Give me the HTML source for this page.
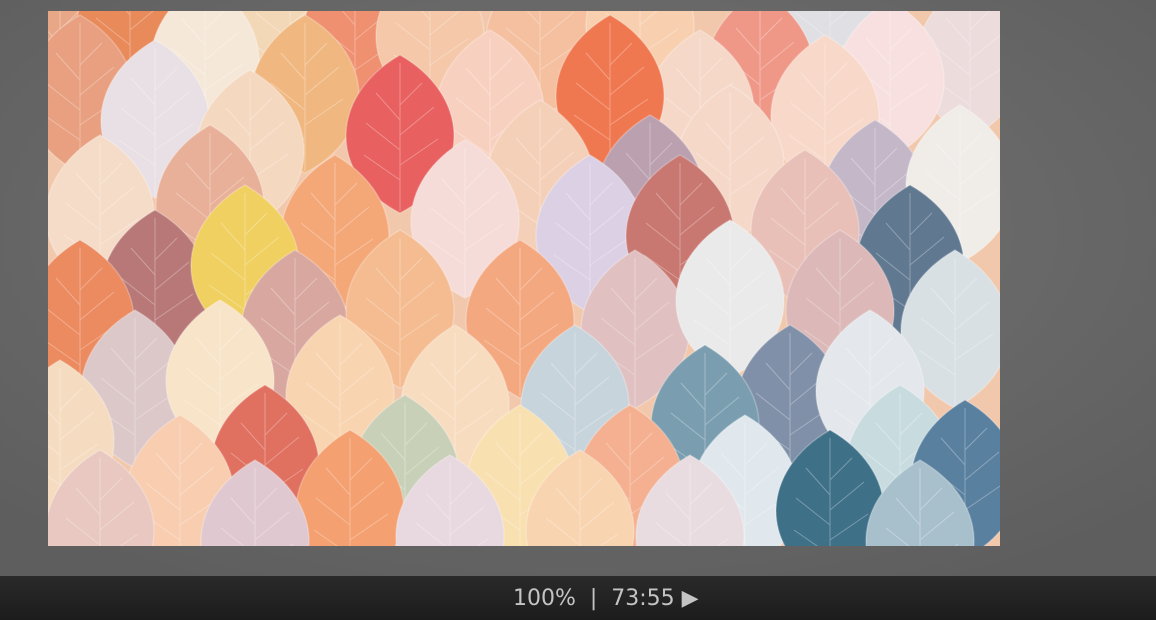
<!DOCTYPE html>
<html><head><style>
html,body{margin:0;padding:0;width:1156px;height:620px;overflow:hidden;background:#6b6b6b;}
#bar{position:absolute;left:0;top:576px;width:1156px;height:44px;background:linear-gradient(#2a2a2a,#1c1c1c);}
#txt{position:absolute;left:513px;top:586px;font:22px "DejaVu Sans","Liberation Sans",sans-serif;color:#c4c4c4;white-space:pre;letter-spacing:0px;}
svg{position:absolute;left:0;top:0;}
</style></head><body>
<svg width="1156" height="576">
<defs>
<radialGradient id="bg" cx="50%" cy="40%" r="70%"><stop offset="0" stop-color="#757575"/><stop offset="1" stop-color="#5e5e5e"/></radialGradient>
<clipPath id="c"><rect x="48" y="11" width="952" height="535"/></clipPath>
<g id="l"><path d="M0,-80 C70,-40 74,40 0,78 C-74,40 -70,-40 0,-80Z" stroke="#fff" stroke-opacity="0.25" stroke-width="1.5"/><path d="M0,-72 L0,76 M0,-30 L22,-52 M0,0 L34,-28 M0,30 L38,4 M0,-15 L-24,-42 M0,15 L-34,-12 M0,45 L-36,20" stroke="#fff" stroke-opacity="0.3" stroke-width="1" fill="none"/></g>
</defs>
<rect width="1156" height="576" fill="url(#bg)"/>
<rect x="48" y="11" width="952" height="535" fill="#f2c8ac"/>
<g clip-path="url(#c)">
<use href="#l" transform="translate(60,60)" fill="#e8a888"/>
<use href="#l" transform="translate(130,30)" fill="#e88a5a"/>
<use href="#l" transform="translate(290,25)" fill="#f3d8b8"/>
<use href="#l" transform="translate(355,40)" fill="#ef9070"/>
<use href="#l" transform="translate(430,35)" fill="#f4c8a8"/>
<use href="#l" transform="translate(540,40)" fill="#f5c0a0"/>
<use href="#l" transform="translate(640,25)" fill="#f8d0b0"/>
<use href="#l" transform="translate(830,25)" fill="#e0dfe4"/>
<use href="#l" transform="translate(970,60)" fill="#ecdcdc"/>
<use href="#l" transform="translate(205,60)" fill="#f5e8d8"/>
<use href="#l" transform="translate(80,95)" fill="#e8a080"/>
<use href="#l" transform="translate(760,70)" fill="#f09888"/>
<use href="#l" transform="translate(890,80)" fill="#f8e0e0"/>
<use href="#l" transform="translate(155,120)" fill="#e8e0e4"/>
<use href="#l" transform="translate(305,95)" fill="#f0b880"/>
<use href="#l" transform="translate(490,110)" fill="#f8d0c0"/>
<use href="#l" transform="translate(700,110)" fill="#f5d8c8"/>
<use href="#l" transform="translate(400,135)" fill="#e86060"/>
<use href="#l" transform="translate(610,95)" fill="#f07850"/>
<use href="#l" transform="translate(825,115)" fill="#f8d8c8"/>
<use href="#l" transform="translate(250,150)" fill="#f5d8c0"/>
<use href="#l" transform="translate(540,180)" fill="#f5d0b8"/>
<use href="#l" transform="translate(730,165)" fill="#f5d8c8"/>
<use href="#l" transform="translate(650,195)" fill="#bba0b0"/>
<use href="#l" transform="translate(210,205)" fill="#e8b098"/>
<use href="#l" transform="translate(100,215)" fill="#f5dcc8"/>
<use href="#l" transform="translate(875,200)" fill="#c4b8c8"/>
<use href="#l" transform="translate(960,185)" fill="#f0ece8"/>
<use href="#l" transform="translate(335,235)" fill="#f4a878"/>
<use href="#l" transform="translate(465,220)" fill="#f5dcd8"/>
<use href="#l" transform="translate(590,235)" fill="#dcd0e4"/>
<use href="#l" transform="translate(680,235)" fill="#c87870"/>
<use href="#l" transform="translate(805,230)" fill="#e8c0b8"/>
<use href="#l" transform="translate(910,265)" fill="#607890"/>
<use href="#l" transform="translate(155,290)" fill="#b87878"/>
<use href="#l" transform="translate(245,265)" fill="#f0d060"/>
<use href="#l" transform="translate(80,320)" fill="#ec8a60"/>
<use href="#l" transform="translate(295,330)" fill="#d8a8a0"/>
<use href="#l" transform="translate(400,310)" fill="#f4bc90"/>
<use href="#l" transform="translate(520,320)" fill="#f4a880"/>
<use href="#l" transform="translate(635,330)" fill="#e0c0c0"/>
<use href="#l" transform="translate(730,300)" fill="#eaeaea"/>
<use href="#l" transform="translate(840,310)" fill="#dcb8b8"/>
<use href="#l" transform="translate(955,330)" fill="#d8e0e4"/>
<use href="#l" transform="translate(135,390)" fill="#dcc8c8"/>
<use href="#l" transform="translate(220,380)" fill="#f8e4c8"/>
<use href="#l" transform="translate(340,395)" fill="#f8d4b0"/>
<use href="#l" transform="translate(455,405)" fill="#f8dcc0"/>
<use href="#l" transform="translate(575,405)" fill="#c8d4dc"/>
<use href="#l" transform="translate(790,405)" fill="#8090a8"/>
<use href="#l" transform="translate(705,425)" fill="#7a9eb0"/>
<use href="#l" transform="translate(870,390)" fill="#e4e8ec"/>
<use href="#l" transform="translate(60,440)" fill="#f5dcc0"/>
<use href="#l" transform="translate(265,465)" fill="#e07060"/>
<use href="#l" transform="translate(405,475)" fill="#c8d0b8"/>
<use href="#l" transform="translate(630,485)" fill="#f4b090"/>
<use href="#l" transform="translate(900,465)" fill="#c8dce0"/>
<use href="#l" transform="translate(965,480)" fill="#5a80a0"/>
<use href="#l" transform="translate(180,495)" fill="#f8cdb0"/>
<use href="#l" transform="translate(520,485)" fill="#f8e0b0"/>
<use href="#l" transform="translate(745,495)" fill="#e0e8ee"/>
<use href="#l" transform="translate(350,510)" fill="#f4a070"/>
<use href="#l" transform="translate(830,510)" fill="#3e7088"/>
<use href="#l" transform="translate(100,530)" fill="#e8c8c0"/>
<use href="#l" transform="translate(255,540)" fill="#e0c8d0"/>
<use href="#l" transform="translate(450,535)" fill="#e8d8e0"/>
<use href="#l" transform="translate(580,530)" fill="#f8d4b0"/>
<use href="#l" transform="translate(690,535)" fill="#e8dce0"/>
<use href="#l" transform="translate(920,540)" fill="#a8c0cc"/>
</g>
</svg>
<div id="bar"></div>
<div id="txt">100%  |  73:55 ▶</div>
</body></html>
